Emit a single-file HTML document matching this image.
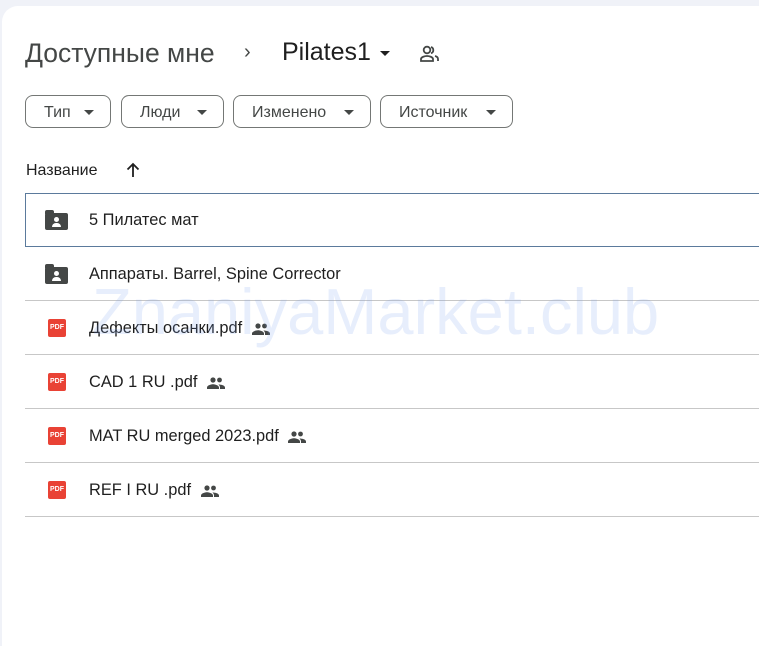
<!DOCTYPE html><html><head><meta charset="utf-8"><style>
body{margin:0;width:759px;height:623px;background:#f0f2f8;font-family:"Liberation Sans",sans-serif;overflow:hidden;position:relative}
.card{position:absolute;left:2px;top:6px;width:780px;height:640px;background:#fff;border-radius:16px 0 0 0}
.t{position:absolute;white-space:nowrap}
.chip{position:absolute;top:95px;height:33px;border:1px solid #747775;border-radius:8px;box-sizing:border-box;font-size:16px;color:#444746;line-height:33px;padding-left:18px}
.chip:after{content:"";position:absolute;right:16px;top:14px;border:5px solid transparent;border-top-color:#444746;border-bottom:0}
.row{position:absolute;left:25px;width:740px;height:54px;border-bottom:1px solid #c7c7c7;box-sizing:border-box}
.row .n{position:absolute;left:64px;top:18px;font-size:16.4px;color:#1f1f1f;white-space:nowrap}
.row svg{vertical-align:-2px;margin-left:5px}
.fold{position:absolute;left:20px;top:20px;width:23px;height:17px;background:#444746;border-radius:2px}
.fold:before{content:"";position:absolute;left:0;top:-3px;width:9px;height:4px;background:#444746;border-radius:2px 2px 0 0}
.fold i{position:absolute;left:9px;top:4px;width:5px;height:5px;border-radius:50%;background:#fff}
.fold b{position:absolute;left:7px;top:10px;width:9px;height:4px;border-radius:4px 4px 0 0;background:#fff}
.pdf{position:absolute;left:23px;top:18px;width:18px;height:18px;background:#e94235;border-radius:2px;color:#fff;font-size:7px;font-weight:bold;text-align:center;line-height:18px}
</style></head><body>
<div class="card"></div>
<div class="t" style="left:25px;top:38px;font-size:26.5px;color:#444746">Доступные мне</div>
<div class="t" style="left:244px;top:41px;font-size:20px;color:#444746">›</div>
<div class="t" style="left:282px;top:38px;font-size:25px;color:#1f1f1f">Pilates1</div>
<div class="t" style="left:380px;top:51px;border:5px solid transparent;border-top-color:#1f1f1f;border-bottom:0;width:0"></div>
<svg class="t" style="left:419px;top:45px" width="21" height="18" viewBox="0 0 21 18"><circle cx="8" cy="5" r="3.3" fill="none" stroke="#444746" stroke-width="1.8"/><path d="M2 16v-2c0-2 4-3 6-3s6 1 6 3v2z" fill="none" stroke="#444746" stroke-width="1.8"/><path d="M12 2a3.3 3.3 0 010 6.3M16 11c2 .5 3 1.5 3 3v2" fill="none" stroke="#444746" stroke-width="1.8"/></svg>
<div class="chip" style="left:25px;width:86px">Тип</div>
<div class="chip" style="left:121px;width:103px">Люди</div>
<div class="chip" style="left:233px;width:138px">Изменено</div>
<div class="chip" style="left:380px;width:133px">Источник</div>
<div class="t" style="left:26px;top:162px;font-size:16px;color:#1f1f1f">Название</div>
<svg class="t" style="left:125px;top:162px" width="16" height="16" viewBox="0 0 16 16"><path d="M8 15V2M2.5 7.5L8 2l5.5 5.5" fill="none" stroke="#1f1f1f" stroke-width="1.8"/></svg>
<div class="row" style="top:193px;border:1px solid #5b7a9c;width:740px"><div class="fold" style="left:19px;top:19px"><i></i><b></b></div><div class="n" style="top:17px;left:63px">5 Пилатес мат</div></div>
<div class="row" style="top:247px"><div class="fold"><i></i><b></b></div><div class="n">Аппараты. Barrel, Spine Corrector</div></div>
<div class="row" style="top:301px"><div class="pdf">PDF</div><div class="n">Дефекты осанки.pdf <svg width="18" height="12" viewBox="0 0 18 12"><circle cx="6" cy="3" r="2.6" fill="#444746"/><circle cx="12.5" cy="3" r="2.4" fill="#444746"/><path d="M0 12v-1.5C0 8.5 4 7.3 6 7.3s6 1.2 6 3.2V12zM13 12v-1.5c0-1.2-.6-2.2-1.6-3 3 0 6.6 1 6.6 3V12z" fill="#444746"/></svg></div></div>
<div class="row" style="top:355px"><div class="pdf">PDF</div><div class="n">CAD 1 RU .pdf <svg width="18" height="12" viewBox="0 0 18 12"><circle cx="6" cy="3" r="2.6" fill="#444746"/><circle cx="12.5" cy="3" r="2.4" fill="#444746"/><path d="M0 12v-1.5C0 8.5 4 7.3 6 7.3s6 1.2 6 3.2V12zM13 12v-1.5c0-1.2-.6-2.2-1.6-3 3 0 6.6 1 6.6 3V12z" fill="#444746"/></svg></div></div>
<div class="row" style="top:409px"><div class="pdf">PDF</div><div class="n">MAT RU merged 2023.pdf <svg width="18" height="12" viewBox="0 0 18 12"><circle cx="6" cy="3" r="2.6" fill="#444746"/><circle cx="12.5" cy="3" r="2.4" fill="#444746"/><path d="M0 12v-1.5C0 8.5 4 7.3 6 7.3s6 1.2 6 3.2V12zM13 12v-1.5c0-1.2-.6-2.2-1.6-3 3 0 6.6 1 6.6 3V12z" fill="#444746"/></svg></div></div>
<div class="row" style="top:463px"><div class="pdf">PDF</div><div class="n">REF I RU .pdf <svg width="18" height="12" viewBox="0 0 18 12"><circle cx="6" cy="3" r="2.6" fill="#444746"/><circle cx="12.5" cy="3" r="2.4" fill="#444746"/><path d="M0 12v-1.5C0 8.5 4 7.3 6 7.3s6 1.2 6 3.2V12zM13 12v-1.5c0-1.2-.6-2.2-1.6-3 3 0 6.6 1 6.6 3V12z" fill="#444746"/></svg></div></div>
<div class="t" style="left:92px;top:274px;font-size:65px;color:rgba(120,160,240,0.18)">ZnaniyaMarket.club</div>
</body></html>
